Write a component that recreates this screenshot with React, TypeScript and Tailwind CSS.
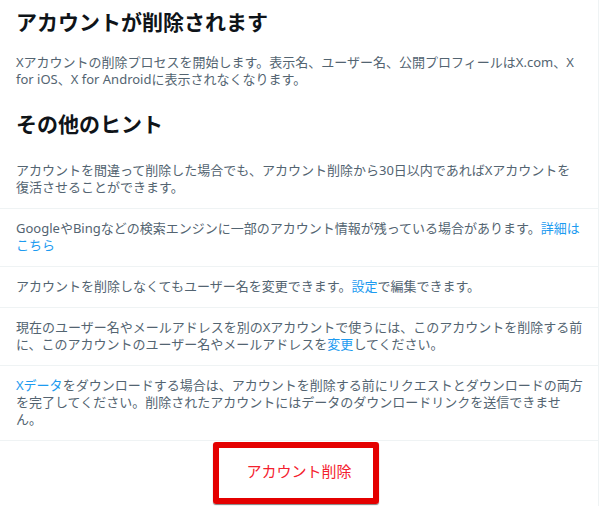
import React from "react";

const Link = ({ children }: { children: React.ReactNode }) => (
  <span className="text-[#1d9bf0]">{children}</span>
);

export default function App() {
  const items: React.ReactNode[] = [
    <>
      アカウントを間違って削除した場合でも、アカウント削除から30日以内であればXアカウントを
      <br />
      復活させることができます。
    </>,
    <>
      GoogleやBingなどの検索エンジンに一部のアカウント情報が残っている場合があります。<Link>詳細は<br />こちら</Link>
    </>,
    <>
      アカウントを削除しなくてもユーザー名を変更できます。<Link>設定</Link>で編集できます。
    </>,
    <>
      現在のユーザー名やメールアドレスを別のXアカウントで使うには、このアカウントを削除する前
      <br />
      に、このアカウントのユーザー名やメールアドレスを<Link>変更</Link>してください。
    </>,
    <>
      <Link>Xデータ</Link>をダウンロードする場合は、アカウントを削除する前にリクエストとダウンロードの両方
      <br />
      を完了してください。削除されたアカウントにはデータのダウンロードリンクを送信できませ
      <br />
      ん。
    </>,
  ];
  return (
    <div className="min-h-[506px] bg-white font-['Noto_Sans','Noto_Sans_CJK_JP',sans-serif]">
      <div className="w-[599px] min-h-[506px] border-r border-[#eff3f4]">
        <h2 className="px-4 pt-2 text-[21px] leading-[28px] font-bold text-[#0f1419]">
          アカウントが削除されます
        </h2>
        <p className="pl-4 pr-[4px] pt-[18px] pb-[22px] text-[13px] leading-[17px] text-[#536471]">
          Xアカウントの削除プロセスを開始します。表示名、ユーザー名、公開プロフィールはX.com、X
          <br />
          for iOS、X for Androidに表示されなくなります。
        </p>
        <h2 className="px-4 text-[21px] leading-[28px] font-bold text-[#0f1419]">
          その他のヒント
        </h2>
        <div className="pt-[24px]">
          {items.map((it, i) => (
            <div
              key={i}
              className={`pl-4 pr-[4px] border-b border-[#eff3f4] text-[13px] leading-[17px] text-[#536471] ${
                i === 0 ? "pt-0 pb-[11.5px]" : "py-[11.5px]"
              }`}
            >
              {it}
            </div>
          ))}
        </div>
        <div className="relative flex h-[62px] items-center justify-center">
          <span className="text-[15px] text-[#f4212e]">アカウント削除</span>
          <div className="absolute left-[213px] top-[1px] h-[62px] w-[166px] rounded-[3px] border-[6px] border-[#e40000] shadow-[0_1px_1px_rgba(0,0,0,0.5)]" />
        </div>
      </div>
    </div>
  );
}
